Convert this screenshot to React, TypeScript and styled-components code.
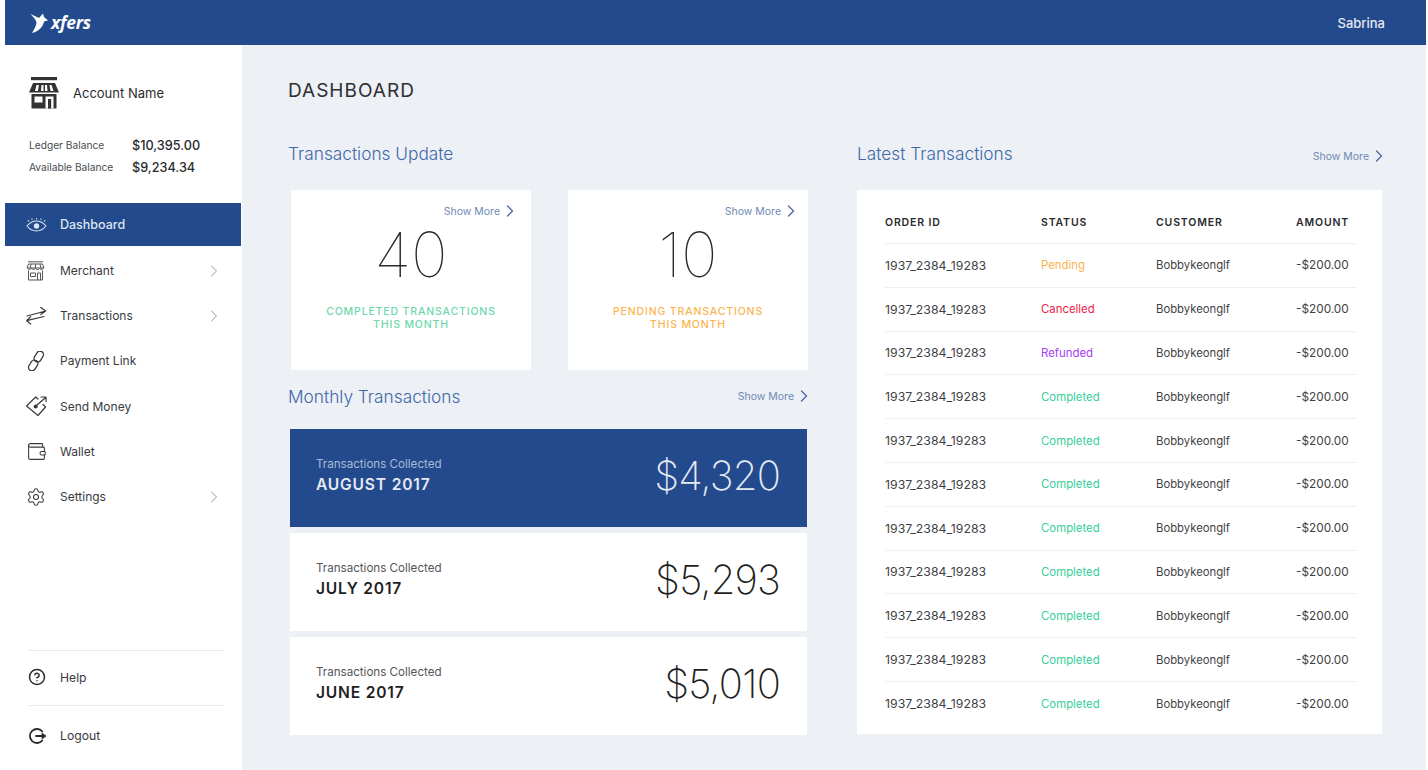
import React from "react";
import styled, { createGlobalStyle } from "styled-components";
import { ChevronRight, Settings, Wallet, CircleHelp } from "lucide-react";

const GlobalStyle = createGlobalStyle`
  html, body {
    margin: 0;
    padding: 0;
    background: #fff;
    overflow: hidden;
  }
  * {
    box-sizing: border-box;
  }
`;

const Page = styled.div`
  width: 1428px;
  height: 770px;
  padding: 0 2px 0 5px;
  font-family: Inter, "Liberation Sans", sans-serif;
  color: #2f2f33;
  display: flex;
  flex-direction: column;
`;

const TopBar = styled.header`
  height: 45px;
  flex: none;
  background: #234a8d;
  display: flex;
  align-items: center;
  justify-content: space-between;
  padding: 0 41px 0 25px;
  color: #e4e9f2;
`;

const Logo = styled.div`
  display: flex;
  align-items: center;
`;

const LogoText = styled.span`
  font-family: "Open Sans", sans-serif;
  font-size: 17.5px;
  font-weight: 700;
  font-style: italic;
  color: #fff;
  margin-left: -3px;
  letter-spacing: -0.3px;
  position: relative;
  top: -1px;
`;

const UserName = styled.span`
  font-size: 13px;
  font-weight: 500;
  padding-top: 1px;
`;

const Body = styled.div`
  flex: 1;
  display: flex;
  min-height: 0;
`;

const Sidebar = styled.aside`
  width: 237px;
  flex: none;
  background: #fff;
  display: flex;
  flex-direction: column;
  padding-bottom: 5px;
`;

const Account = styled.div`
  display: flex;
  align-items: center;
  gap: 14px;
  padding: 32px 0 0 24px;
  font-size: 13px;
  color: #2b2b2f;
`;

const Balances = styled.div`
  padding: 25px 0 0 24px;
  display: grid;
  grid-template-columns: 103px 1fr;
  grid-auto-rows: 22px;
  align-items: center;
`;

const BalanceLabel = styled.span`
  font-size: 10.2px;
  color: #4a4a4e;
`;

const BalanceValue = styled.span`
  font-size: 12.7px;
  font-weight: 500;
  color: #2b2b2f;
`;

const Nav = styled.nav`
  margin-top: 25px;
  width: 236px;
`;

const NavItem = styled.div<{ $active?: boolean }>`
  height: ${(p) => (p.$active ? 43 : 45.2)}px;
  display: flex;
  align-items: center;
  padding: 0 17.5px 0 21px;
  font-size: ${(p) => (p.$active ? 12.5 : 12)}px;
  font-weight: ${(p) => (p.$active ? 500 : 400)};
  background: ${(p) => (p.$active ? "#234a8d" : "transparent")};
  color: ${(p) => (p.$active ? "#dfe5f0" : "#3a3a3e")};
  margin-bottom: ${(p) => (p.$active ? 2 : 0)}px;
`;

const NavIcon = styled.span`
  width: 34px;
  flex: none;
  display: flex;
  align-items: center;
`;

const NavLabel = styled.span`
  flex: 1;
`;

const SidebarFooter = styled.div`
  margin: auto 18px 0 23px;
`;

const FooterItem = styled.div`
  height: 55px;
  padding-bottom: 2px;
  border-top: 1px solid #e9e9ea;
  display: flex;
  align-items: center;
  font-size: 12.2px;
  color: #3a3a3e;
  gap: 14px;
  &:last-child {
    height: 60px;
    padding-bottom: 0;
  }
`;

const FooterIcon = styled.span`
  width: 18px;
  flex: none;
  display: flex;
  align-items: center;
`;

const Main = styled.main`
  flex: 1;
  background: #edf0f5;
  padding: 34px 43px 0 46px;
`;

const PageTitle = styled.h1`
  margin: 0;
  font-size: 19px;
  line-height: 23px;
  font-weight: 400;
  letter-spacing: 1px;
  color: #2f2f33;
`;

const Columns = styled.div`
  display: flex;
  gap: 49px;
  margin-top: 38px;
`;

const LeftColumn = styled.section`
  width: 520px;
  flex: none;
`;

const RightColumn = styled.section`
  flex: 1;
`;

const SectionHead = styled.div`
  display: flex;
  justify-content: space-between;
  align-items: center;
  height: 26px;
`;

const SectionTitle = styled.h2`
  margin: 0;
  font-size: 17.3px;
  font-weight: 300;
  color: #3e68a8;
`;

const ShowMoreLink = styled.a<{ $low?: boolean }>`
  display: inline-flex;
  align-items: center;
  font-size: 10.5px;
  color: #6f8ab5;
  position: relative;
  top: ${(p) => (p.$low ? 3 : 0)}px;
  margin-right: -5.5px;
  svg {
    margin-left: -0.5px;
  }
`;

const StatRow = styled.div`
  display: flex;
  justify-content: space-between;
  padding-left: 3px;
  margin-top: 24px;
`;

const StatCard = styled.div`
  width: 240px;
  height: 180px;
  background: #fff;
  display: flex;
  flex-direction: column;
  align-items: center;
  padding-top: 14px;
`;

const StatLink = styled.div<{ $inset: number }>`
  align-self: flex-end;
  height: 14px;
  display: flex;
  align-items: center;
  margin-right: ${(p) => p.$inset}px;
`;

const StatNumber = styled.div`
  font-size: 62px;
  line-height: 62px;
  font-weight: 100;
  color: #2a2a2e;
  margin-top: 6px;
`;

const StatCaption = styled.div<{ $color: string }>`
  margin-top: 19px;
  font-size: 10.5px;
  line-height: 13px;
  font-weight: 500;
  letter-spacing: 0.85px;
  text-align: center;
  color: ${(p) => p.$color};
`;

const MonthHead = styled(SectionHead)`
  margin-top: 13px;
`;

const MonthList = styled.div`
  margin: 20px 1px 0 2px;
  display: flex;
  flex-direction: column;
  gap: 6px;
`;

const MonthRow = styled.div<{ $active?: boolean }>`
  height: 98px;
  display: flex;
  align-items: center;
  justify-content: space-between;
  padding: 0 27px 2px 26px;
  background: ${(p) => (p.$active ? "#234a8d" : "#fff")};
  color: ${(p) => (p.$active ? "#e4e9f2" : "#1f1f23")};
`;

const MonthLabel = styled.div<{ $active?: boolean }>`
  font-size: 11.6px;
  line-height: 16px;
  color: ${(p) => (p.$active ? "#a9bad6" : "#55555a")};
`;

const MonthName = styled.div`
  font-size: 15.6px;
  line-height: 26px;
  font-weight: 600;
  letter-spacing: 0.8px;
`;

const MonthAmount = styled.div`
  font-size: 40px;
  font-weight: 200;
  line-height: 50px;
  letter-spacing: -0.8px;
  margin-bottom: 2px;
`;

const TableCard = styled.div`
  margin-top: 24px;
  height: 544px;
  width: 525px;
  background: #fff;
  padding: 11px 26px 0 28px;
`;

const Row = styled.div<{ $head?: boolean }>`
  display: grid;
  grid-template-columns: 156px 115px 140px 1fr;
  align-items: center;
  height: ${(p) => (p.$head ? 43 : 43.8)}px;
  font-size: ${(p) => (p.$head ? 10.5 : 12)}px;
  font-weight: ${(p) => (p.$head ? 600 : 400)};
  letter-spacing: ${(p) => (p.$head ? 0.85 : 0)}px;
  color: ${(p) => (p.$head ? "#2a2a2e" : "#3f3f44")};
  &:not(:last-child) {
    border-bottom: 1px solid #efeff0;
  }
`;

const Cell = styled.span<{ $size: number; $color?: string }>`
  font-size: ${(p) => p.$size}px;
  color: ${(p) => p.$color || "inherit"};
`;

const StoreBold = () => (
  <svg width="30" height="32" viewBox="0 0 30 32" fill="none">
    <rect x="2" y="0" width="26" height="3.2" fill="#333" />
    <path d="M4 6h22l4 9.5H0z" fill="#333" />
    <path d="M7.5 8h2.4l-1 6H6zM12.5 8h2v6h-2.5zM16 8h2l.5 6H16zM20.5 8h2l2 6h-3z" fill="#fff" />
    <path d="M2.5 17h25v14.5H2.5z" fill="#333" />
    <path d="M5.5 19.5h8v6h-8zM16.5 19.5h8v12h-8z" fill="#fff" />
    <path d="M19 22h3.2v9.5H19z" fill="#333" />
  </svg>
);

const Eye = () => (
  <svg width="21" height="14" viewBox="0 0 21 14" fill="none" stroke="#dfe5f0" strokeWidth="1.1">
    <path d="M1 8c3-3.6 6-5 9.5-5s6.500 1.400 9.500 5c-3 3.600-6 5-9.500 5S4 11.600 1 8z" />
    <circle cx="10.5" cy="8" r="2.7" fill="#dfe5f0" stroke="none" />
    <path d="M3 3.500L1.800 2.300M6.300 1.800L5.700.5M10.500 1.300V0M14.700 1.800L15.300.5M18 3.500l1.200-1.200" />
  </svg>
);

const Store = () => (
  <svg width="19" height="20" viewBox="0 0 19 20" fill="none" stroke="#555" strokeWidth="1">
    <path d="M2 .8h15M2.500 3h14l1.500 4H1zM1.500 7.500c1 1.300 2.800 1.300 4 0 1 1.300 3 1.300 4 0 1 1.300 3 1.300 4 0 1.200 1.300 3 1.300 4 0" />
    <path d="M5 3.200L4 7.300M9.500 3.200v4M14 3.200l1 4.100" />
    <path d="M2.500 9.500v9.500h14V9.500M4.500 12h5v3.500h-5zM11.500 19v-7h3v7" />
  </svg>
);

const Swap = () => (
  <svg width="21" height="18" viewBox="0 0 21 18" fill="none" stroke="#3a3a3e" strokeWidth="1.2" strokeLinecap="round" strokeLinejoin="round">
    <path d="M1 9l18.700-5M14.700.4l5 3.600-5 3.500" />
    <path d="M18 9.500L.7 13.700M4.700 9.800l-4 3.900 4 3.300" />
  </svg>
);

const Chain = () => (
  <svg width="20" height="20" viewBox="0 0 20 20" fill="none" stroke="#3a3a3e" strokeWidth="1.3">
    <g transform="rotate(-58 10 10)">
      <rect x="-1" y="6.5" width="11.5" height="7" rx="3.5" />
      <rect x="9.5" y="6.5" width="11.5" height="7" rx="3.5" />
    </g>
  </svg>
);

const SendMoney = () => (
  <svg width="21" height="20" viewBox="0 0 21 20" fill="none" stroke="#3a3a3e" strokeWidth="1.2" strokeLinejoin="round" strokeLinecap="round">
    <path d="M12 3L9.700 1 .5 10 12 19.500 19.500 11l-2.500-2.500" />
    <circle cx="9.700" cy="10.500" r="2" fill="#3a3a3e" stroke="none" />
    <path d="M11 9l8.700-7.500M15 1h5v4.500" />
  </svg>
);

const Logout = () => (
  <svg width="18" height="18" viewBox="0 0 18 18" fill="none" stroke="#2b2b2f" strokeWidth="1.8" strokeLinecap="round">
    <path d="M14.300 4.500A7 7 0 1 0 14.300 13.500" />
    <path d="M8 9h8.500" />
    <path d="M14.500 7.200L17 9l-2.500 1.800z" fill="#2b2b2f" />
  </svg>
);

const LogoMark = () => (
  <svg width="24" height="21" viewBox="0 0 24 21" fill="#fff">
    <path d="M.5 2L9 6l4-4.500L14 5l4 3.500-4 1C13 15 9 19 2 21c2.500-4 4.500-8 4.500-11C5 7 3 4.500.5 2z" />
  </svg>
);

const ShowMore = ({ low }: { low?: boolean }) => (
  <ShowMoreLink $low={low}>
    Show More <ChevronRight size={20} strokeWidth={1.6} color="#4a6ea9" />
  </ShowMoreLink>
);

const navItems = [
  { label: "Dashboard", icon: <Eye />, active: true },
  { label: "Merchant", icon: <Store />, arrow: true },
  { label: "Transactions", icon: <Swap />, arrow: true },
  { label: "Payment Link", icon: <Chain /> },
  { label: "Send Money", icon: <SendMoney /> },
  { label: "Wallet", icon: <Wallet size={21} strokeWidth={1.2} color="#3a3a3e" /> },
  { label: "Settings", icon: <Settings size={20} strokeWidth={1.3} color="#3a3a3e" />, arrow: true },
];

const months = [
  { name: "AUGUST 2017", amount: "$4,320", active: true },
  { name: "JULY 2017", amount: "$5,293" },
  { name: "JUNE 2017", amount: "$5,010" },
];

const statusColors: Record<string, string> = {
  Pending: "#f8b24f",
  Cancelled: "#ee2348",
  Refunded: "#a53ef5",
  Completed: "#35cf98",
};

const orders = [
  "Pending",
  "Cancelled",
  "Refunded",
  "Completed",
  "Completed",
  "Completed",
  "Completed",
  "Completed",
  "Completed",
  "Completed",
  "Completed",
];

export default function App() {
  return (
    <Page>
      <GlobalStyle />
      <TopBar>
        <Logo>
          <LogoMark />
          <LogoText>xfers</LogoText>
        </Logo>
        <UserName>Sabrina</UserName>
      </TopBar>
      <Body>
        <Sidebar>
          <Account>
            <StoreBold />
            Account Name
          </Account>
          <Balances>
            <BalanceLabel>Ledger Balance</BalanceLabel>
            <BalanceValue>$10,395.00</BalanceValue>
            <BalanceLabel>Available Balance</BalanceLabel>
            <BalanceValue>$9,234.34</BalanceValue>
          </Balances>
          <Nav>
            {navItems.map((item) => (
              <NavItem key={item.label} $active={item.active}>
                <NavIcon>{item.icon}</NavIcon>
                <NavLabel>{item.label}</NavLabel>
                {item.arrow && <ChevronRight size={20} strokeWidth={1.1} color="#8a8a8e" />}
              </NavItem>
            ))}
          </Nav>
          <SidebarFooter>
            <FooterItem>
              <FooterIcon>
                <CircleHelp size={18} strokeWidth={2} color="#2b2b2f" />
              </FooterIcon>
              Help
            </FooterItem>
            <FooterItem>
              <FooterIcon>
                <Logout />
              </FooterIcon>
              Logout
            </FooterItem>
          </SidebarFooter>
        </Sidebar>
        <Main>
          <PageTitle>DASHBOARD</PageTitle>
          <Columns>
            <LeftColumn>
              <SectionHead>
                <SectionTitle>Transactions Update</SectionTitle>
              </SectionHead>
              <StatRow>
                <StatCard>
                  <StatLink $inset={17}>
                    <ShowMore />
                  </StatLink>
                  <StatNumber>40</StatNumber>
                  <StatCaption $color="#6fd8ab">
                    COMPLETED TRANSACTIONS
                    <br />
                    THIS MONTH
                  </StatCaption>
                </StatCard>
                <StatCard>
                  <StatLink $inset={13}>
                    <ShowMore />
                  </StatLink>
                  <StatNumber>10</StatNumber>
                  <StatCaption $color="#fbb44f">
                    PENDING TRANSACTIONS
                    <br />
                    THIS MONTH
                  </StatCaption>
                </StatCard>
              </StatRow>
              <MonthHead>
                <SectionTitle>Monthly Transactions</SectionTitle>
                <ShowMore />
              </MonthHead>
              <MonthList>
                {months.map((m) => (
                  <MonthRow key={m.name} $active={m.active}>
                    <div>
                      <MonthLabel $active={m.active}>Transactions Collected</MonthLabel>
                      <MonthName>{m.name}</MonthName>
                    </div>
                    <MonthAmount>{m.amount}</MonthAmount>
                  </MonthRow>
                ))}
              </MonthList>
            </LeftColumn>
            <RightColumn>
              <SectionHead>
                <SectionTitle>Latest Transactions</SectionTitle>
                <ShowMore low />
              </SectionHead>
              <TableCard>
                <Row $head>
                  <span>ORDER ID</span>
                  <span>STATUS</span>
                  <span>CUSTOMER</span>
                  <span>AMOUNT</span>
                </Row>
                {orders.map((status, i) => (
                  <Row key={i}>
                    <Cell $size={12.3}>1937_2384_19283</Cell>
                    <Cell $size={11.4} $color={statusColors[status]}>
                      {status}
                    </Cell>
                    <Cell $size={11.3}>Bobbykeonglf</Cell>
                    <Cell $size={11.8}>-$200.00</Cell>
                  </Row>
                ))}
              </TableCard>
            </RightColumn>
          </Columns>
        </Main>
      </Body>
    </Page>
  );
}
